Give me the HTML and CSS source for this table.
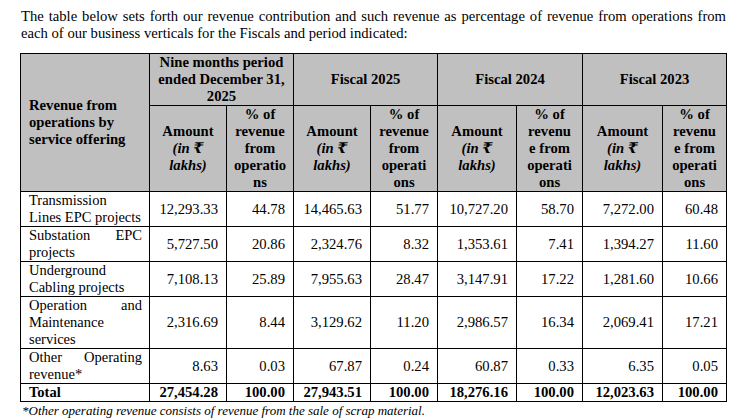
FILE: index.html
```html
<!DOCTYPE html>
<html>
<head>
<meta charset="utf-8">
<link rel="stylesheet" href="styles.css">
</head>
<body>
<div class="page">
  <p class="intro">The table below sets forth our revenue contribution and such revenue as percentage of revenue from operations from each of our business verticals for the Fiscals and period indicated:</p>
  <table class="rev">
    <colgroup>
      <col class="c-label">
      <col class="c-a1"><col class="c-p1">
      <col class="c-a2"><col class="c-p2">
      <col class="c-a3"><col class="c-p3">
      <col class="c-a4"><col class="c-p4">
    </colgroup>
    <thead>
      <tr>
        <th rowspan="2" class="lbl">Revenue from operations by service offering</th>
        <th colspan="2">Nine months period ended December 31, 2025</th>
        <th colspan="2">Fiscal 2025</th>
        <th colspan="2">Fiscal 2024</th>
        <th colspan="2">Fiscal 2023</th>
      </tr>
      <tr>
        <th>Amount<br><i>(in ₹<br>lakhs)</i></th>
        <th>% of<br>revenue<br>from<br>operatio<br>ns</th>
        <th>Amount<br><i>(in ₹<br>lakhs)</i></th>
        <th>% of<br>revenue<br>from<br>operati<br>ons</th>
        <th>Amount<br><i>(in ₹<br>lakhs)</i></th>
        <th>% of<br>revenu<br>e from<br>operati<br>ons</th>
        <th>Amount<br><i>(in ₹<br>lakhs)</i></th>
        <th>% of<br>revenu<br>e from<br>operati<br>ons</th>
      </tr>
    </thead>
    <tbody>
      <tr>
        <td class="name">Transmission Lines EPC projects</td>
        <td>12,293.33</td><td>44.78</td><td>14,465.63</td><td>51.77</td><td>10,727.20</td><td>58.70</td><td>7,272.00</td><td>60.48</td>
      </tr>
      <tr>
        <td class="name">Substation EPC projects</td>
        <td>5,727.50</td><td>20.86</td><td>2,324.76</td><td>8.32</td><td>1,353.61</td><td>7.41</td><td>1,394.27</td><td>11.60</td>
      </tr>
      <tr>
        <td class="name">Underground Cabling projects</td>
        <td>7,108.13</td><td>25.89</td><td>7,955.63</td><td>28.47</td><td>3,147.91</td><td>17.22</td><td>1,281.60</td><td>10.66</td>
      </tr>
      <tr>
        <td class="name">Operation and Maintenance services</td>
        <td>2,316.69</td><td>8.44</td><td>3,129.62</td><td>11.20</td><td>2,986.57</td><td>16.34</td><td>2,069.41</td><td>17.21</td>
      </tr>
      <tr>
        <td class="name">Other Operating revenue*</td>
        <td>8.63</td><td>0.03</td><td>67.87</td><td>0.24</td><td>60.87</td><td>0.33</td><td>6.35</td><td>0.05</td>
      </tr>
      <tr class="total">
        <td class="name">Total</td>
        <td>27,454.28</td><td>100.00</td><td>27,943.51</td><td>100.00</td><td>18,276.16</td><td>100.00</td><td>12,023.63</td><td>100.00</td>
      </tr>
    </tbody>
  </table>
  <p class="note">*Other operating revenue consists of revenue from the sale of scrap material.</p>
</div>
</body>
</html>
```

FILE: styles.css
```css
html, body {
  margin: 0;
  padding: 0;
  background: #ffffff;
}
body {
  font-family: "Liberation Serif", "DejaVu Serif", serif;
  font-size: 14.67px;
  line-height: 17px;
  color: #000000;
}
.page {
  padding: 8px 11px 0 21px;
}
.intro {
  margin: 0 0 11px 0;
  text-align: justify;
}
.rev {
  border-collapse: collapse;
  table-layout: fixed;
  width: 706px;
  margin-left: -1px;
}
.c-label { width: 129px; }
.c-a1 { width: 77px; }
.c-p1 { width: 67px; }
.c-a2 { width: 77px; }
.c-p2 { width: 67px; }
.c-a3 { width: 79px; }
.c-p3 { width: 66px; }
.c-a4 { width: 80px; }
.c-p4 { width: 64px; }
.rev th, .rev td {
  border: 1px solid #000000;
  vertical-align: middle;
}
.rev th {
  padding: 0 4px;
  background: #c0c0c0;
  font-weight: bold;
  text-align: center;
}
.rev th.lbl {
  padding: 0 8px;
  text-align: left;
}
.rev th i {
  font-style: italic;
}
.rev td {
  padding: 0 8px;
  text-align: right;
  white-space: nowrap;
}
.rev td.name {
  padding: 0 7px 0 8px;
  font-size: 14.5px;
  text-align: justify;
  white-space: normal;
}
.rev tr.total td {
  font-weight: bold;
}
.note {
  margin: 0;
  padding-left: 1px;
  font-size: 13px;
  font-style: italic;
}
```
